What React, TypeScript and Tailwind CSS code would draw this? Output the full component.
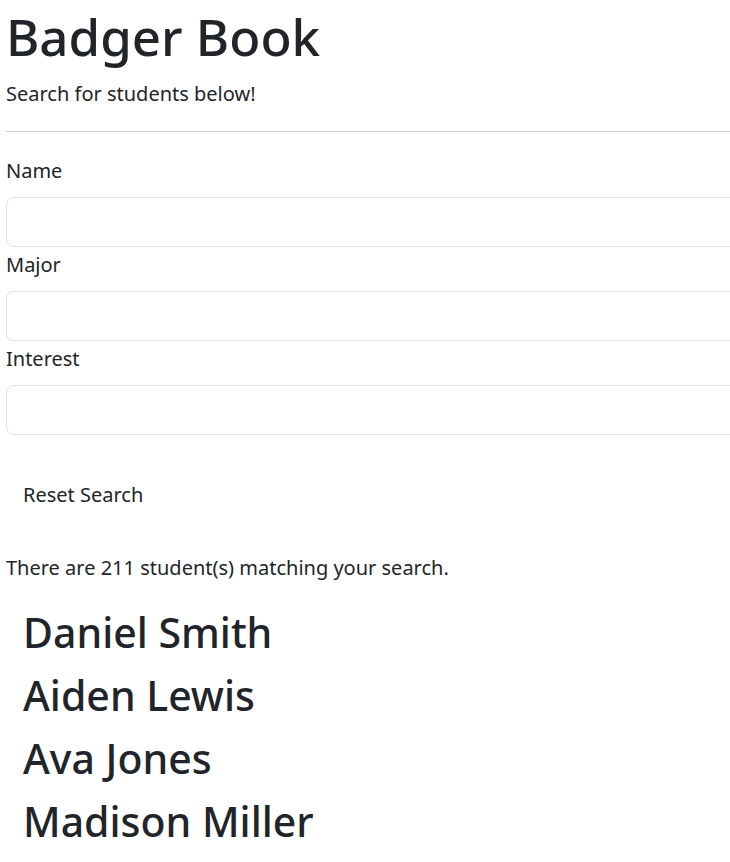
import React from "react";

const students = ["Daniel Smith", "Aiden Lewis", "Ava Jones", "Madison Miller"];

function Field({ label }: { label: string }) {
    return (
        <div className="pt-[3px]">
            <label className="mb-[11px] block leading-[30px]">{label}</label>
            <input
                type="text"
                className="block h-[50px] w-[760px] rounded-[8px] border border-[#dee2e6] bg-white px-4 outline-none"
            />
        </div>
    );
}

export default function App() {
    return (
        <div
            className="min-h-screen overflow-hidden bg-white px-[6px] text-[20px] leading-[30px] text-[#212529]"
            style={{ fontFamily: '"Noto Sans", sans-serif' }}
        >
            <h1 className="pt-[6px] text-[51px] font-medium leading-[1.2]">Badger Book</h1>
            <p className="mt-[12px]">Search for students below!</p>
            <hr className="mt-[22px] w-[760px] border-t border-[#cccccc]" />

            <form className="mt-[21px]" onSubmit={e => e.preventDefault()}>
                <Field label="Name" />
                <Field label="Major" />
                <Field label="Interest" />
            </form>

            <button type="button" className="mt-[37px] px-[17px] py-[8px] leading-[30px]">
                Reset Search
            </button>

            <p className="mt-[35px]">There are 211 student(s) matching your search.</p>

            <div className="mt-[18px] px-[17px]">
                {students.map(name => (
                    <h2 key={name} className="text-[41px] font-medium leading-[63px]">
                        {name}
                    </h2>
                ))}
            </div>
        </div>
    );
}
